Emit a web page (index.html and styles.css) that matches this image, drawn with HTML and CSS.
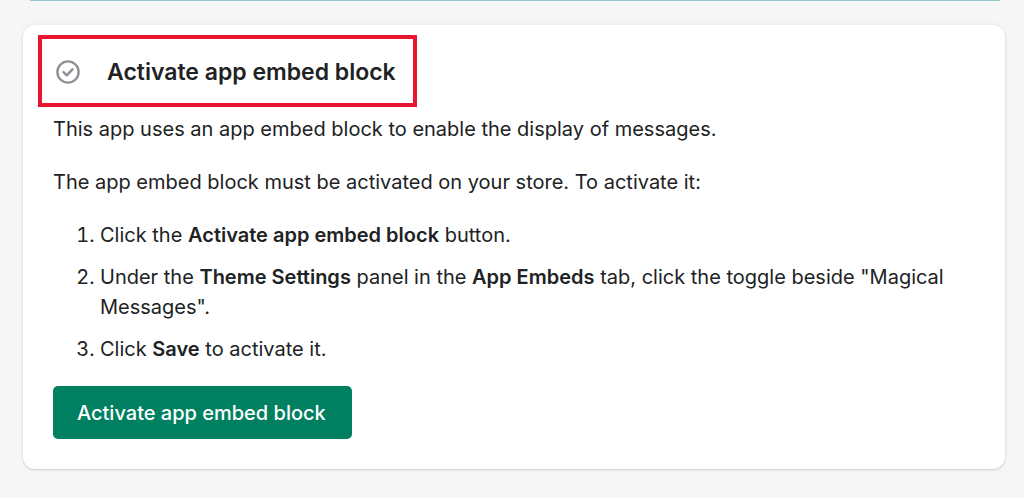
FILE: index.html
```html
<!DOCTYPE html>
<html lang="en">
<head>
    <meta charset="UTF-8">
    <meta name="viewport" content="width=device-width, initial-scale=1.0">
    <title>Activate app embed block</title>
    <link rel="stylesheet" href="styles.css">
</head>
<body>
    <div class="banner"></div>
    <main class="card">
        <div class="card-header">
            <svg class="check-icon" viewBox="0 0 24 24" fill="none" stroke="#8c9196" stroke-width="2.4" aria-hidden="true">
                <circle cx="12" cy="12" r="10.6"/>
                <path d="M7.5 12.2l3.2 3.1 5.8-6" stroke-width="2.5" stroke-linecap="round" stroke-linejoin="round"/>
            </svg>
            <h2>Activate app embed block</h2>
        </div>
        <div class="card-body">
            <p>This app uses an app embed block to enable the display of messages.</p>
            <p>The app embed block must be activated on your store. To activate it:</p>
            <ol class="steps">
                <li>Click the <b>Activate app embed block</b> button.</li>
                <li>Under the <b>Theme Settings</b> panel in the <b>App Embeds</b> tab, click the toggle beside "Magical Messages".</li>
                <li>Click <b>Save</b> to activate it.</li>
            </ol>
            <button type="button" class="primary-button">Activate app embed block</button>
        </div>
    </main>
</body>
</html>
```
FILE: styles.css
```css
* {
    box-sizing: border-box;
}
body {
    margin: 0;
    background-color: #f6f6f6;
    color: #202223;
    font-family: Inter, sans-serif;
    font-size: 20px;
    line-height: 30px;
}
.banner {
    height: 1px;
    margin: 0 24px 24px 30px;
    background-color: #98c6cd;
}
.card {
    margin: 0 19px 28px 23px;
    padding: 10px 30px 30px 15px;
    background-color: #fff;
    border-radius: 12px;
    box-shadow: 0 0 6px rgba(23, 24, 24, 0.05), 0 1px 2px rgba(0, 0, 0, 0.15);
}
.card-header {
    display: flex;
    align-items: center;
    gap: 27px;
    width: fit-content;
    padding: 18px 17px 16px 14px;
    border: 4px solid #ea1530;
}
.check-icon {
    width: 24px;
    height: 24px;
}
h2 {
    margin: 0;
    font-size: 23px;
    line-height: 30px;
    font-weight: 600;
}
.card-body {
    padding: 7px 0 0 15px;
}
p {
    margin: 0 0 23px;
}
b {
    font-weight: 600;
}
.steps {
    margin: 0 0 22px;
    padding-left: 47px;
}
.steps li {
    margin-bottom: 12px;
}
.primary-button {
    display: block;
    padding: 12px 26px 11px 24px;
    border: none;
    border-radius: 5px;
    background-color: #008060;
    color: #fff;
    font-family: inherit;
    font-size: 20px;
    font-weight: 500;
    line-height: 30px;
    cursor: pointer;
}
```
